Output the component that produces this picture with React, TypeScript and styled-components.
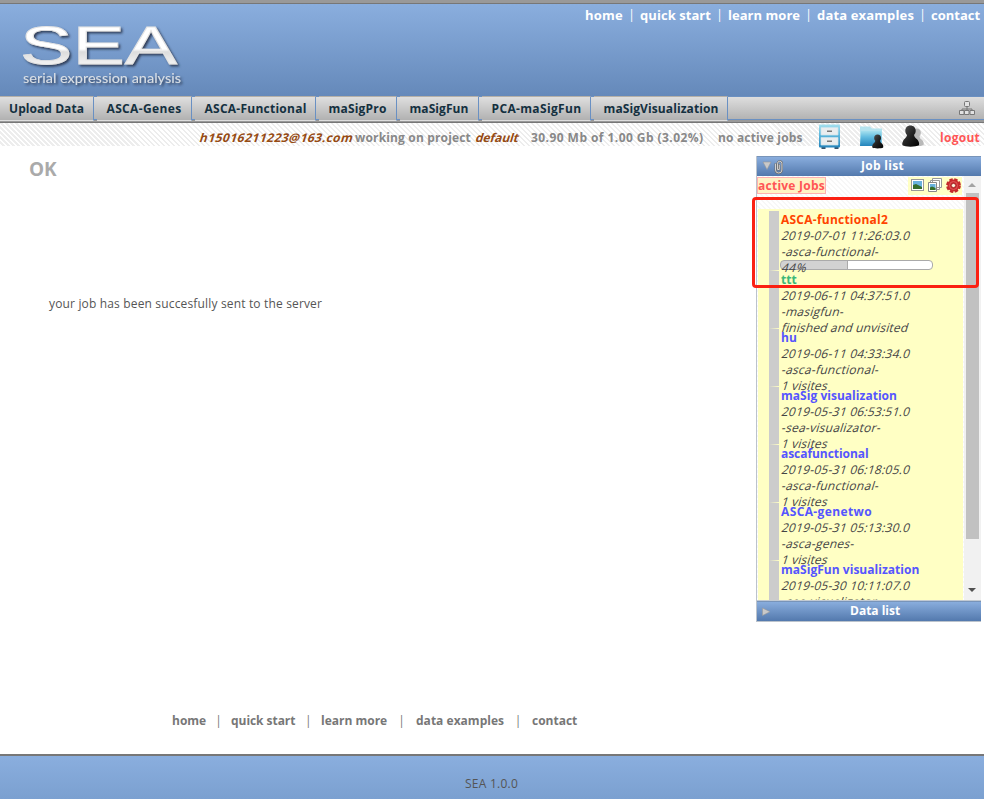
import React from "react";
import styled, { createGlobalStyle, css } from "styled-components";

const Global = createGlobalStyle`
  * { box-sizing: border-box; }
  body { margin: 0; background: #fff; overflow: hidden; font: 12px/16px "Open Sans", "Noto Sans", sans-serif; color: #555; }
`;

const stripes = (tone: string) => css`
  background: repeating-linear-gradient(45deg, #fff 0, #fff 2px, ${tone} 2px, ${tone} 3.54px);
`;

const Page = styled.div`
  display: flex;
  flex-direction: column;
  width: 984px;
  height: 799px;
`;
const Header = styled.header`
  display: flex;
  justify-content: space-between;
  height: 96px;
  flex: none;
  border-top: 3px solid #999;
  background: linear-gradient(#777 0, #777 1px, #8aaede 1px, #6589ba 100%);
`;
const TopLinks = styled.nav`
  display: flex;
  height: 16px;
  margin: 4px 3px 0 0;
  color: #fff;
  font-size: 13px;
  font-weight: 700;
`;
const LinkSlot = styled.span<{ $w: number }>`
  display: flex;
  width: ${(p) => p.$w}px;
  white-space: nowrap;
`;
const Pipe = styled.span`
  flex: 1;
  text-align: center;
  font-weight: 400;
  font-size: 12px;
`;
const Text = styled.span<{ $ls?: number }>`
  white-space: nowrap;
  letter-spacing: ${(p) => p.$ls ?? 0}px;
`;
const Slanted = styled(Text)`
  display: inline-block;
  transform: skewX(-17deg);
  transform-origin: 0 70%;
`;

const NavBar = styled.nav`
  display: flex;
  flex: none;
  height: 27px;
  border-bottom: 1px solid #777;
  background: linear-gradient(#6b90c1 0, #6b90c1 1px, #dedede 1px, #b3b3b3 23px, #6b90c1 23px, #6b90c1 24px, #999 24px);
`;
const Tab = styled.a<{ $w: number; $pad: number }>`
  width: ${(p) => p.$w}px;
  height: 25px;
  padding: 4px 0 0 ${(p) => p.$pad - 3}px;
  border-top: 1px solid #b5b0a8;
  border-right: 1px solid #6990c3;
  border-bottom: 1px solid #dedede;
  margin-left: 3px;
  background: linear-gradient(#dfdfdf, #b1b1b1);
  color: #14303f;
  font-weight: 700;
  &:first-child { margin-left: 0; padding-left: ${(p) => p.$pad}px; }
`;
const SiteMap = styled.div`
  margin: 4px 9px 0 auto;
  height: 16px;
`;

const Status = styled.div`
  display: flex;
  align-items: center;
  flex: none;
  height: 23px;
  padding: 6px 0 0 199px;
  ${stripes("#ededed")}
  color: #888;
  font-weight: 700;
`;
const StatusItem = styled.span<{ $w: number; $tone?: string }>`
  width: ${(p) => p.$w}px;
  flex: none;
  color: ${(p) => p.$tone ?? "inherit"};
`;
const StatusIcon = styled.span<{ $w: number }>`
  width: ${(p) => p.$w}px;
  height: 25px;
  flex: none;
  margin-top: -3px;
`;

const Body = styled.main`
  display: flex;
  justify-content: space-between;
  height: 557px;
  flex: none;
`;
const Message = styled.section`
  padding: 11px 0 0 29px;
`;
const Title = styled.h1`
  margin: 0;
  color: #aaa;
  font-size: 19px;
  letter-spacing: -0.2px;
  line-height: 24px;
`;
const Notice = styled.p`
  margin: 115px 0 0 20px;
`;

const Panel = styled.aside`
  position: relative;
  width: 225px;
  height: 466px;
  margin: 10px 3px 0 0;
  border: 1px solid #bbc3cc;
  border-width: 0 0 1px 1px;
`;
const PanelHead = styled.div`
  display: flex;
  height: 20px;
  line-height: 18px;
  background: linear-gradient(#89addd, #5379ad);
  color: #fff;
  font-weight: 700;
  border-top: 1px solid #7894b9;
`;
const HeadIcons = styled.span<{ $w: number }>`
  width: ${(p) => p.$w}px;
  height: 18px;
`;
const PanelView = styled.div`
  display: flex;
  height: 425px;
  overflow: hidden;
  border-bottom: 1px solid #c3cad2;
`;
const ListColumn = styled.div`
  width: 207px;
  ${stripes("#f7f7f7")}
`;
const JobTools = styled.div`
  display: flex;
  justify-content: space-between;
  height: 33px;
  padding: 1px 2px 0 0;
`;
const ActiveTag = styled.span`
  height: 17px;
  width: 69px;
  border: 1px solid #ffb0b0;
  background: #fff2c4;
  color: #ff5555;
  font-weight: 700;
`;
const ToolBox = styled.span`
  width: 54px;
  height: 18px;
  background: #ffffc4;
`;
const Jobs = styled.div`
  margin: 0 1px 0 1px;
  background: #ffffc4;
  padding: 2px 0 0 11px;
`;
const Job = styled.div<{ $h: number }>`
  height: ${(p) => p.$h}px;
  padding: 1px 0 0 2px;
  border-left: 10px solid #ccc;
  border-bottom: 1px solid #ffffc4;
`;
const JobName = styled.div<{ $tone: string }>`
  color: ${(p) => p.$tone};
  font-weight: 700;
`;
const JobLine = styled.div`
  color: #444;
  height: 16px;
`;
const Meter = styled.div`
  width: 153px;
  height: 10px;
  margin: 0 0 0 -1px;
  border: 1px solid #aaa;
  border-radius: 4px;
  color: #444;
  line-height: 14px;
  background: linear-gradient(90deg, #d2d2d2 66px, #aaa 66px, #aaa 67px, #fff 67px);
`;
const ScrollTrack = styled.div`
  display: flex;
  flex-direction: column;
  align-items: center;
  width: 17px;
  padding-right: 1px;
  background: #f1f1f1;
`;
const ScrollThumb = styled.div`
  width: 13px;
  height: 346px;
  background: #c1c1c1;
`;
const Arrow = styled.div<{ $down?: boolean }>`
  height: 17px;
  padding-top: 7px;
  margin-top: ${(p) => (p.$down ? 42 : 0)}px;
  &::before {
    content: "";
    display: block;
    border: 4px solid transparent;
    border-width: ${(p) => (p.$down ? "4px 4px 0" : "0 4px 4px")};
    border-${(p) => (p.$down ? "top" : "bottom")}-color: ${(p) => (p.$down ? "#505050" : "#a3a3a3")};
  }
`;
const Highlight = styled.div`
  position: absolute;
  left: -5px;
  top: 41px;
  width: 227px;
  height: 91px;
  border: 3px solid #fb2012;
  border-radius: 4px;
`;

const BottomLinks = styled.nav`
  display: flex;
  height: 51px;
  flex: none;
  padding: 10px 0 0 172px;
  color: #777;
  font-weight: 700;
`;
const Footer = styled.footer`
  flex: 1;
  padding: 20px 0 0 465px;
  border-top: 2px solid #777;
  background: linear-gradient(#8aaede, #7ba0d0);
`;

const Logo = () => (
  <svg width="200" height="92" viewBox="0 3 200 92">
    <defs>
      <linearGradient id="silver" x1="0" y1="0" x2="0" y2="1">
        <stop offset="0.25" stopColor="#fff" />
        <stop offset="0.57" stopColor="#fff" />
        <stop offset="0.62" stopColor="#dcdcdc" />
        <stop offset="0.8" stopColor="#f0f0f0" />
      </linearGradient>
      <filter id="drop" x="-10%" y="-10%" width="120%" height="140%">
        <feDropShadow dx="1.8" dy="1.8" stdDeviation="1.2" floodColor="#26354d" floodOpacity="0.9" />
      </filter>
    </defs>
    <g filter="url(#drop)" fontFamily="Liberation Sans, sans-serif">
      <text transform="translate(20 63.500) scale(1.455 1)" fontSize="54" fill="url(#silver)" stroke="#e4e4e4" strokeWidth="0.8">SEA</text>
      <text x="23" y="82.500" fontSize="14" fontFamily="Lato, sans-serif" fill="#dadfe5" textLength="158" lengthAdjust="spacingAndGlyphs">serial expression analysis</text>
    </g>
  </svg>
);

const SiteMapIcon = () => (
  <svg width="16" height="16" viewBox="0 0 16 16" fill="#e2e2e2" stroke="#777">
    <path d="M8 6v4M3 11V9h10v2" fill="none" />
    <rect x="5.5" y="1.5" width="5" height="5" rx="1" />
    <path d="M0.500 10.500h4.500v4H0.500zM5.500 10.500h4.500v4H5.500zM11 10.500h4.500v4H11z" />
  </svg>
);

const CabinetIcon = () => (
  <svg width="24" height="25" viewBox="0 0 24 25">
    <defs>
      <linearGradient id="aqua" x1="0" y1="0" x2="0" y2="1">
        <stop offset="0" stopColor="#a5e0ee" />
        <stop offset="0.4" stopColor="#62bce0" />
        <stop offset="1" stopColor="#2484bb" />
      </linearGradient>
    </defs>
    <path d="M3.500 22h4v3h-4zM16.500 22h4v3h-4z" fill="#38546b" />
    <rect x="1" y="0.5" width="21" height="23" rx="1" fill="url(#aqua)" />
    <path d="M3 3.500h17V11H3zM3 13.500h17V21H3z" fill="#e9edef" stroke="#cde4ed" strokeWidth="0.7" />
    <path d="M9 6.500h5v1.600H9zM9 16.500h5v1.600H9z" fill="#777" />
  </svg>
);

const Pawn = ({ fill }: { fill: string }) => (
  <path fill={fill} d="M9 0C5.600 0 3.500 2.400 3.500 5.500c0 2 .8 3.500 1.800 4.500C5 12 4 13 2.300 14.500 1 16 -.3 19 .5 21 3 23 15 23 18 21 18.800 18.500 17.500 16 16 14.500 14 13 13.200 12 12.800 10c1-1.200 1.800-2.500 1.800-4.500C14.600 2.400 12.400 0 9 0z" />
);

const FolderIcon = () => (
  <svg width="25" height="25" viewBox="0 0 25 25">
    <defs>
      <linearGradient id="ink" x1="0" y1="0" x2="1" y2="1">
        <stop offset="0" stopColor="#555" />
        <stop offset="0.5" stopColor="#222" />
        <stop offset="1" stopColor="#000" />
      </linearGradient>
    </defs>
    <path d="M1 2.500h10l2 2h10V22H1z" fill="#b4e3ef" />
    <path d="M2 7h20.500v15H1z" fill="url(#aqua)" />
    <g transform="translate(13 10.500) scale(.62)"><Pawn fill="url(#ink)" /></g>
  </svg>
);

const UsersIcon = () => (
  <svg width="25" height="25" viewBox="0 0 25 25">
    <g transform="translate(8.500 4.500) scale(.78)"><Pawn fill="#b8b8b8" /></g>
    <g transform="translate(1 1.500) scale(.94)"><Pawn fill="url(#ink)" /></g>
  </svg>
);

const JobHeadIcon = () => (
  <svg width="30" height="18" viewBox="0 0 30 18">
    <path d="M6 5h8l-4 7.500z" fill="#c9c9c9" stroke="#999" strokeWidth="0.6" />
    <g fill="none" strokeLinecap="round">
      <path d="M18.500 7v6a3.200 3 0 0 0 6.400 0V6.500a2.200 2.200 0 0 0-4.400 0v6h1.800V8" stroke="#6c6c6c" strokeWidth="1.900" />
      <path d="M18.500 7v6a3.200 3 0 0 0 6.400 0V6.500a2.200 2.200 0 0 0-4.400 0v6h1.800V8" stroke="#ddd" strokeWidth="0.900" />
    </g>
  </svg>
);

const DataHeadIcon = () => (
  <svg width="16" height="18" viewBox="0 0 16 18">
    <path d="M5.500 6v7.500L13 9.700z" fill="#c9c9c9" stroke="#999" strokeWidth="0.600" />
  </svg>
);

const JobToolIcons = () => (
  <svg width="54" height="18" viewBox="0 0 54 18">
    <rect x="3.500" y="2.500" width="12" height="11" fill="#fff" stroke="#999" />
    <rect x="5" y="4" width="9" height="8" fill="#69b2de" />
    <path d="M5 8l3-1 6 3v2H5z" fill="#356e2b" />
    <path d="M24.500 1.500h9v9h-9zM22.500 3.500h9v9h-9z" fill="#fff" stroke="#999" />
    <path d="M20.500 5.500h8v9h-8z" fill="#fff" stroke="#888" />
    <rect x="22" y="7" width="5.500" height="6" fill="#69b2de" />
    <path d="M22 10.500l2-1 3.500 1.500v2H22z" fill="#356e2b" />
    <circle cx="45.500" cy="8.500" r="6.300" fill="none" stroke="#c32a2c" strokeWidth="2.200" strokeDasharray="3.400 1.548" />
    <circle cx="45.500" cy="8.500" r="6" fill="#c9292c" />
    <circle cx="45.500" cy="8.500" r="4" fill="none" stroke="#e05a5c" strokeWidth="1" />
    <circle cx="45.500" cy="8.500" r="2.100" fill="#fff5df" stroke="#921d20" strokeWidth="0.700" />
  </svg>
);

type Link = [label: string, width: number, spacing: number];
const topLinks: Link[] = [["home", 55, 0.24], ["quick start", 88, 0.06], ["learn more", 89, 0.03], ["data examples", 114, 0.15], ["contact", 50, 0]];
const bottomLinks: Link[] = [["home", 59, 0], ["quick start", 90, -0.05], ["learn more", 95, 0], ["data examples", 116, 0.02], ["contact", 50, 0]];
const Links = ({ items }: { items: Link[] }) => (
  <>
    {items.map(([label, w, ls], i) => (
      <LinkSlot key={label} $w={w}>
        <Text $ls={ls}>{label}</Text>
        {i < items.length - 1 && <Pipe>|</Pipe>}
      </LinkSlot>
    ))}
  </>
);

const tabs: [string, number, number, number][] = [
  ["Upload Data", 94, 9, 0.06],
  ["ASCA-Genes", 95, 12.5, 0.36],
  ["ASCA-Functional", 121, 12.5, 0.25],
  ["maSigPro", 78, 12.5, 0.19],
  ["maSigFun", 79, 12.5, 0.07],
  ["PCA-maSigFun", 109, 12.5, 0.35],
  ["maSigVisualization", 134, 12.5, 0.1],
];

const jobs: { name: string; tone: string; ls: number; date: string; kind: string; state?: string; progress?: string }[] = [
  { name: "ASCA-functional2", tone: "#ff4400", ls: 0.24, date: "2019-07-01 11:26:03.0", kind: "-asca-functional-", progress: "44%" },
  { name: "ttt", tone: "#3cb878", ls: 0, date: "2019-06-11 04:37:51.0", kind: "-masigfun-", state: "finished and unvisited" },
  { name: "hu", tone: "#5555ff", ls: 0, date: "2019-06-11 04:33:34.0", kind: "-asca-functional-", state: "1 visites" },
  { name: "maSig visualization", tone: "#5555ff", ls: 0.03, date: "2019-05-31 06:53:51.0", kind: "-sea-visualizator-", state: "1 visites" },
  { name: "ascafunctional", tone: "#5555ff", ls: -0.05, date: "2019-05-31 06:18:05.0", kind: "-asca-functional-", state: "1 visites" },
  { name: "ASCA-genetwo", tone: "#5555ff", ls: 0.38, date: "2019-05-31 05:13:30.0", kind: "-asca-genes-", state: "1 visites" },
  { name: "maSigFun visualization", tone: "#5555ff", ls: 0.03, date: "2019-05-30 10:11:07.0", kind: "-sea-visualizator-" },
];

export default function App() {
  return (
    <Page>
      <Global />
      <Header>
        <Logo />
        <TopLinks><Links items={topLinks} /></TopLinks>
      </Header>
      <NavBar>
        {tabs.map(([label, w, pad, ls]) => (
          <Tab key={label} $w={w} $pad={pad}><Text $ls={ls}>{label}</Text></Tab>
        ))}
        <SiteMap><SiteMapIcon /></SiteMap>
      </NavBar>
      <Status>
        <StatusItem $w={156} $tone="#964b14"><Slanted $ls={0.5}>h15016211223@163.com</Slanted></StatusItem>
        <StatusItem $w={120}><Text $ls={0.16}>working on project</Text></StatusItem>
        <StatusItem $w={56} $tone="#964b14"><Slanted $ls={-0.05}>default</Slanted></StatusItem>
        <StatusItem $w={187}><Text $ls={0.44}>30.90 Mb of 1.00 Gb (3.02%)</Text></StatusItem>
        <StatusItem $w={100}><Text $ls={0.16}>no active jobs</Text></StatusItem>
        <StatusIcon $w={41}><CabinetIcon /></StatusIcon>
        <StatusIcon $w={42}><FolderIcon /></StatusIcon>
        <StatusIcon $w={39}><UsersIcon /></StatusIcon>
        <StatusItem $w={41} $tone="#ff5555"><Text $ls={0.27}>logout</Text></StatusItem>
      </Status>
      <Body>
        <Message>
          <Title>OK</Title>
          <Notice><Text $ls={0.16}>your job has been succesfully sent to the server</Text></Notice>
        </Message>
        <Panel>
          <PanelHead>
            <HeadIcons $w={104}><JobHeadIcon /></HeadIcons>
            <Text $ls={0.3}>Job list</Text>
          </PanelHead>
          <PanelView>
            <ListColumn>
              <JobTools>
                <ActiveTag><Text $ls={0.25}>active Jobs</Text></ActiveTag>
                <ToolBox><JobToolIcons /></ToolBox>
              </JobTools>
              <Jobs>
                {jobs.map((job) => (
                  <Job key={job.name} $h={job.progress ? 60 : 58}>
                    <JobName $tone={job.tone}><Text $ls={job.ls}>{job.name}</Text></JobName>
                    <JobLine><Slanted $ls={0.24}>{job.date}</Slanted></JobLine>
                    <JobLine><Slanted $ls={0.27}>{job.kind}</Slanted></JobLine>
                    {job.state && <JobLine><Slanted $ls={0.15}>{job.state}</Slanted></JobLine>}
                    {job.progress && <Meter><Slanted $ls={0.6}>{job.progress}</Slanted></Meter>}
                  </Job>
                ))}
              </Jobs>
            </ListColumn>
            <ScrollTrack>
              <Arrow />
              <ScrollThumb />
              <Arrow $down />
            </ScrollTrack>
          </PanelView>
          <PanelHead>
            <HeadIcons $w={93}><DataHeadIcon /></HeadIcons>
            <Text>Data list</Text>
          </PanelHead>
          <Highlight />
        </Panel>
      </Body>
      <BottomLinks><Links items={bottomLinks} /></BottomLinks>
      <Footer><Text $ls={0.24}>SEA 1.0.0</Text></Footer>
    </Page>
  );
}
